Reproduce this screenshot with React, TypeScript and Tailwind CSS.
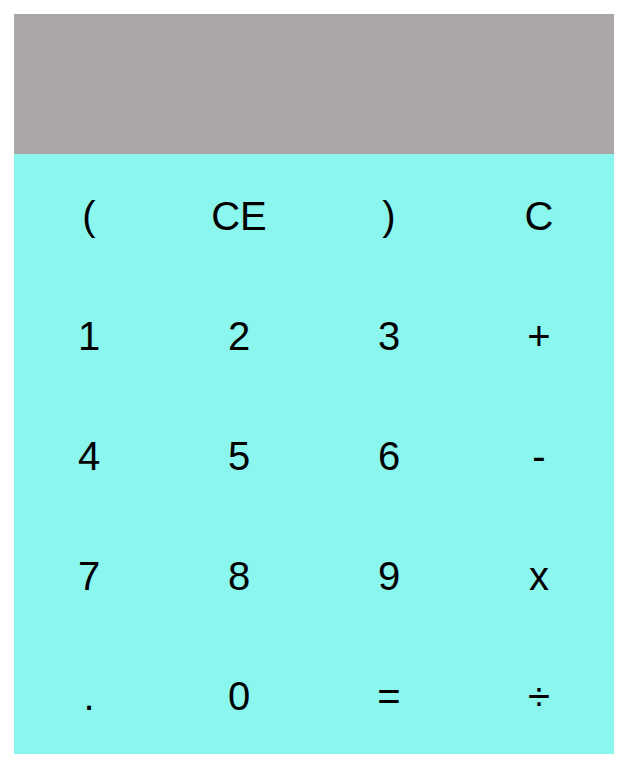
export default function App() {
    const keys = ["(", "CE", ")", "C", "1", "2", "3", "+", "4", "5", "6", "-", "7", "8", "9", "x", ".", "0", "=", "÷"];

    return (
        <div className="bg-white min-h-screen p-[14px] font-['Liberation_Sans',Arial,sans-serif]">
            <div className="w-[600px]">
                {/* display */}
                <div className="h-[140px] bg-[#aaa6a5]"></div>
                {/* keypad */}
                <div className="grid grid-cols-4 bg-[#8bf6ee]">
                    {keys.map((k) => (
                        <div key={k} className="h-[120px] pt-[4px] flex items-center justify-center text-[40px] text-black">
                            {k}
                        </div>
                    ))}
                </div>
            </div>
        </div>
    );
}
